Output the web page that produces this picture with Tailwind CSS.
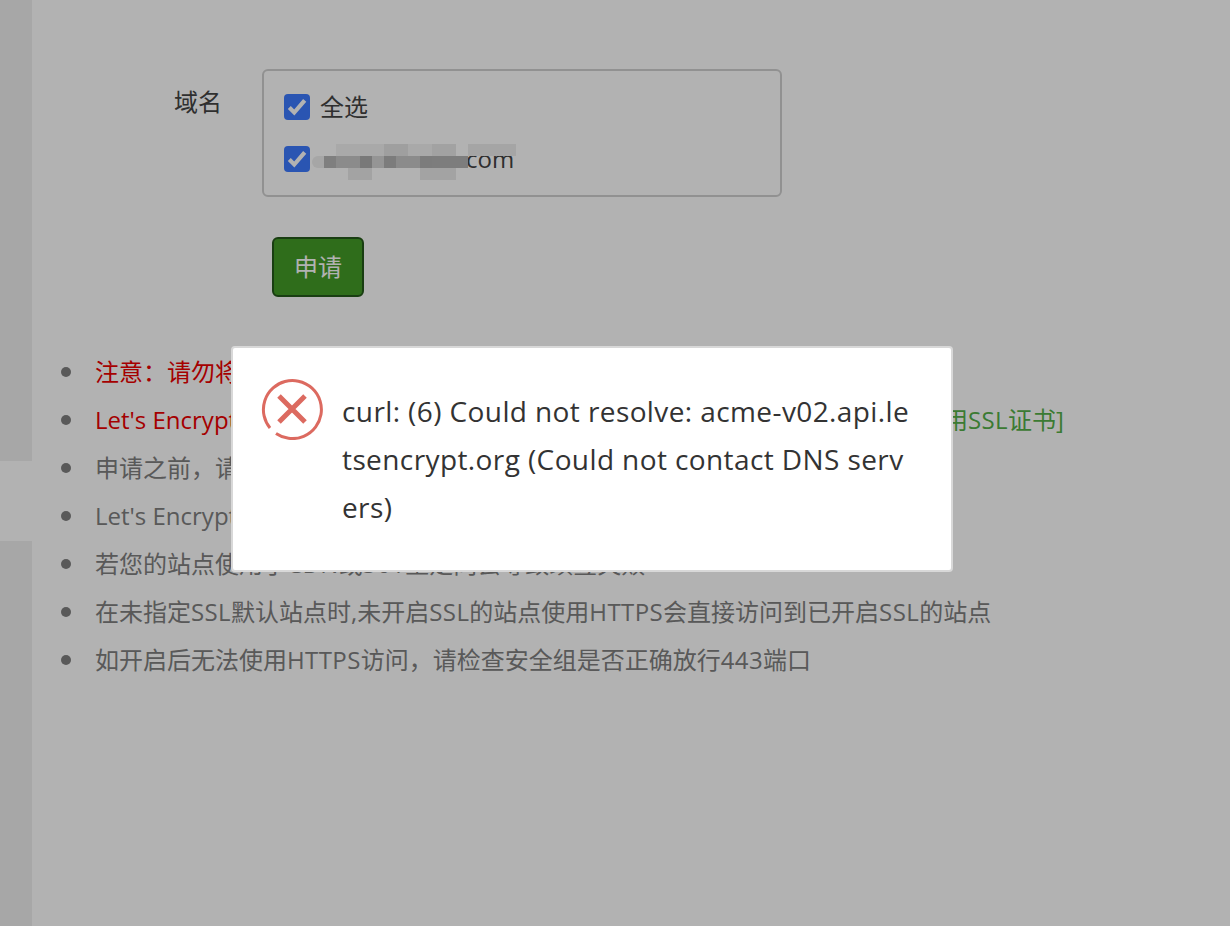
<!DOCTYPE html>
<html lang="zh-CN">
<head>
    <meta charset="UTF-8">
    <title>SSL</title>
    <script src="https://cdn.jsdelivr.net/npm/@tailwindcss/browser@4"></script>
</head>
<body class="bg-white h-[926px] overflow-hidden font-['Open_Sans','Noto_Sans_CJK_SC',sans-serif] text-[24px] text-[#444]">
    <div class="flex h-[926px]">
        <!-- left strip -->
        <div class="w-[32px] flex flex-col shrink-0">
            <div class="h-[461px] bg-[#f0f0f0]"></div>
            <div class="h-[80px] bg-white"></div>
            <div class="flex-1 bg-[#f0f0f0]"></div>
        </div>

        <div class="flex-1 pt-[69px]">
            <div class="flex">
                <div class="w-[190px] text-right leading-[66px]">域名</div>
                <div class="ml-[40px] w-[520px] h-[128px] border-2 border-[#d0d0d0] rounded-md pl-[20px] pt-[10px]">
                    <label class="flex items-center h-[52px] gap-[10px]">
                        <span class="w-[26px] h-[26px] rounded bg-[#3d7aff] flex items-center justify-center">
                            <svg class="w-[22px] h-[22px]" viewBox="0 0 20 20" fill="none" stroke="#fff" stroke-width="3.8"><path d="M3 10.5l4.5 4.5L17 4"/></svg>
                        </span>
                        全选
                    </label>
                    <label class="flex items-center h-[52px] gap-[10px] relative">
                        <span class="w-[26px] h-[26px] rounded bg-[#3d7aff] flex items-center justify-center">
                            <svg class="w-[22px] h-[22px]" viewBox="0 0 20 20" fill="none" stroke="#fff" stroke-width="3.8"><path d="M3 10.5l4.5 4.5L17 4"/></svg>
                        </span>
                        <span class="ml-[146px]">com</span>
                        <!-- mosaic over the hidden domain -->
                        <div class="absolute left-[28px] top-[11px] w-[204px] h-[36px]">
                            <div class="flex h-[12px] pl-[24px]">
                                <i class="w-[48px] bg-[#f3f3f3]"></i><i class="w-[24px] bg-[#e4e4e4]"></i><i class="w-[24px] bg-[#f3f3f3]"></i><i class="w-[24px] bg-[#e8e8e8]"></i><i class="w-[12px]"></i><i class="w-[48px] bg-[#ececec]"></i>
                            </div>
                            <div class="flex h-[12px]">
                                <i class="w-[12px] bg-[#eeeeee] rounded-l-md"></i><i class="w-[12px] bg-[#b7b7b7]"></i><i class="w-[24px] bg-[#c8c8c8]"></i><i class="w-[12px] bg-[#aeaeae]"></i><i class="w-[12px] bg-[#d6d6d6]"></i><i class="w-[12px] bg-[#b2b2b2]"></i><i class="w-[24px] bg-[#c8c8c8]"></i><i class="w-[12px] bg-[#b2b2b2]"></i><i class="w-[36px] bg-[#b4b4b4]"></i>
                            </div>
                            <div class="flex h-[12px] pl-[36px]">
                                <i class="w-[24px] bg-[#eaeaea]"></i><i class="w-[48px]"></i><i class="w-[36px] bg-[#eaeaea]"></i>
                            </div>
                        </div>
                    </label>
                </div>
            </div>

            <button class="block ml-[240px] mt-[40px] w-[92px] h-[60px] rounded-md border-2 border-[#25591a] bg-[#449d28] text-white">申请</button>

            <ul class="mt-[51px] ml-[29px] leading-[48px] text-[#808080] whitespace-nowrap">
                <li class="flex items-center gap-[24px] text-[#ec0000]"><span class="w-[10px] h-[10px] rounded-full bg-[#808080]"></span>注意&#xFF1A;请勿将SSL证书用于非法网站</li>
                <li class="flex items-center gap-[24px] text-[#ec0000]"><span class="w-[10px] h-[10px] rounded-full bg-[#808080]"></span><span>Let's Encrypt因更换根证书&#xFF0C;部分老旧设备访问时可能提示不可信&#xFF0C;考虑购买<span class="ml-[3px] text-[#55b048]">[商用<span class="tracking-[0.4px]">SSL</span>证书]</span></span></li>
                <li class="flex items-center gap-[24px]"><span class="w-[10px] h-[10px] rounded-full bg-[#808080]"></span>申请之前&#xFF0C;请确保域名已解析&#xFF0C;如未解析会导致审核失败</li>
                <li class="flex items-center gap-[24px]"><span class="w-[10px] h-[10px] rounded-full bg-[#808080]"></span>Let's Encrypt免费证书&#xFF0C;有效期3个月&#xFF0C;支持多域名。默认会自动续签</li>
                <li class="flex items-center gap-[24px]"><span class="w-[10px] h-[10px] rounded-full bg-[#808080]"></span><span>若您的站点使用了<span class="tracking-[0.4px]">CDN</span>或<span class="tracking-[0.4px]">301</span>重定向会导致续签失败</span></li>
                <li class="flex items-center gap-[24px]"><span class="w-[10px] h-[10px] rounded-full bg-[#808080]"></span><span>在未指定<span class="tracking-[0.4px]">SSL</span>默认站点时,未开启<span class="tracking-[0.4px]">SSL</span>的站点使用<span class="tracking-[0.4px]">HTTPS</span>会直接访问到已开启<span class="tracking-[0.4px]">SSL</span>的站点</span></li>
                <li class="flex items-center gap-[24px]"><span class="w-[10px] h-[10px] rounded-full bg-[#808080]"></span><span>如开启后无法使用<span class="tracking-[0.4px]">HTTPS</span>访问&#xFF0C;请检查安全组是否正确放行<span class="tracking-[0.4px]">443</span>端口</span></li>
            </ul>
        </div>
    </div>

    <!-- shade -->
    <div class="fixed inset-0 bg-black/30"></div>

    <!-- error dialog -->
    <div class="fixed left-[231px] top-[346px] w-[722px] h-[226px] bg-white border-2 border-[#d8d8d8] rounded-[4px] pl-[109px] pr-[36px] pt-[39px] text-[28px] tracking-[0.4px] leading-[48px] text-[#333] break-all">
        <svg class="absolute left-[28px] top-[30px] w-[62px] h-[62px]" viewBox="0 0 62 62" fill="none" stroke="#dc6a60">
            <path stroke-width="3" d="M9 50A29 29 0 1 1 15 55.5" />
            <path stroke-width="5" d="M18 18l26 26M44 18L18 44" />
        </svg>
        curl: (6) Could not resolve: acme-v02.api.letsencrypt.org (Could not contact DNS servers)
    </div>
</body>
</html>
